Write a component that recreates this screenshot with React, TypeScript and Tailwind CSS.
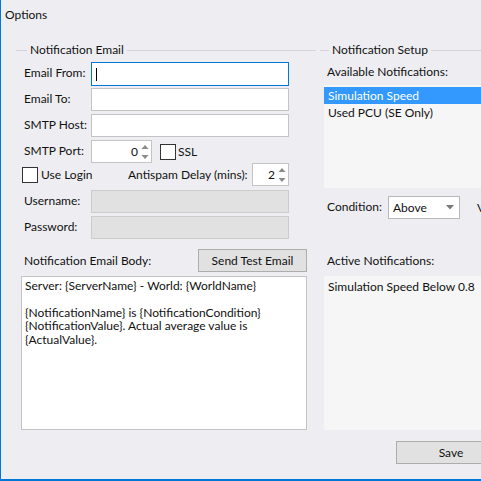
import React from 'react';

const GroupHeader: React.FC<{ title: string; lead: string }> = ({ title, lead }) => (
  <div className="flex h-[12px] items-center">
    <div className={`h-px bg-[#d5d5d9] ${lead}`} />
    <span className="px-[3px] leading-none whitespace-nowrap">{title}</span>
    <div className="h-px flex-1 bg-[#d5d5d9]" />
  </div>
);

const SpinArrows: React.FC = () => (
  <svg width="12" height="21" viewBox="0 0 12 21" className="shrink-0">
    <path d="M2.5 8 L6 4 L9.5 8 Z" fill="#8a8a8a" />
    <path d="M2.5 14 L6 18 L9.5 14 Z" fill="#8a8a8a" />
  </svg>
);

const Spinner: React.FC<{ value: string; width: string }> = ({ value, width }) => (
  <div className={`flex h-[23px] items-center border border-[#c4c4c4] bg-white ${width}`}>
    <span className="flex-1 pr-[1px] text-right">{value}</span>
    <SpinArrows />
  </div>
);

const Checkbox: React.FC = () => (
  <div className="h-[16px] w-[16px] shrink-0 border border-[#333333] bg-white" />
);

const FieldRow: React.FC<{ label: string; className?: string; children: React.ReactNode }> = ({
  label,
  className = '',
  children,
}) => (
  <div className={`flex items-center ${className}`}>
    <span className="w-[67px] shrink-0 pb-[2px]">{label}</span>
    {children}
  </div>
);

export default function App() {
  return (
    <div className="flex h-[481px] w-[481px] flex-col overflow-hidden border-b-2 border-l border-[#0078d7] bg-[#eeeef2] font-['Lato',sans-serif] text-[12px] text-[#111111]">
      <div className="flex h-[30px] shrink-0 items-center pl-[4px]">Options</div>

      <div className="flex pl-[15px] pt-[14px]">
        {/* Notification Email */}
        <div className="flex w-[300px] shrink-0 flex-col">
          <GroupHeader title="Notification Email" lead="w-[11px]" />

          <div className="mt-[6px] flex flex-col pl-[8px]">
            <FieldRow label="Email From:">
              <div className="flex h-[24px] w-[198px] items-center border border-[#0078d7] bg-white pl-[4px]">
                <div className="h-[13px] w-px bg-black" />
              </div>
            </FieldRow>
            <FieldRow label="Email To:" className="mt-[2px]">
              <div className="h-[23px] w-[198px] border border-[#c4c4c4] bg-white" />
            </FieldRow>
            <FieldRow label="SMTP Host:" className="mt-[3px]">
              <div className="h-[23px] w-[198px] border border-[#c4c4c4] bg-white" />
            </FieldRow>
            <FieldRow label="SMTP Port:" className="mt-[3px]">
              <Spinner value="0" width="w-[61px]" />
              <div className="ml-[8px] flex items-center gap-[2px]">
                <Checkbox />
                <span>SSL</span>
              </div>
            </FieldRow>
            <div className="-ml-[2px] flex h-[23px] items-center">
              <Checkbox />
              <span className="ml-[3px] w-[87px]">Use Login</span>
              <span className="w-[124px]">Antispam Delay (mins):</span>
              <Spinner value="2" width="w-[37px]" />
            </div>
            <FieldRow label="Username:" className="mt-[4px]">
              <div className="h-[23px] w-[198px] border border-[#cccccc] bg-[#e1e1e1]" />
            </FieldRow>
            <FieldRow label="Password:" className="mt-[3px]">
              <div className="h-[23px] w-[198px] border border-[#cccccc] bg-[#e1e1e1]" />
            </FieldRow>
          </div>

          <div className="ml-[5px] mt-[10px] flex w-[286px] flex-col">
            <div className="flex h-[23px] items-center justify-between">
              <span className="pl-[3px]">Notification Email Body:</span>
              <button className="h-[23px] w-[109px] border border-[#adadad] bg-[#e1e1e1] text-center">
                Send Test Email
              </button>
            </div>
            <div className="mt-[4px] h-[154px] border border-[#c4c4c4] bg-white px-[3px] pt-[2px] leading-[13.4px] whitespace-pre-line">
              {'Server: {ServerName} - World: {WorldName}\n\n{NotificationName} is {NotificationCondition}\n{NotificationValue}. Actual average value is\n{ActualValue}.'}
            </div>
          </div>
        </div>

        {/* Notification Setup */}
        <div className="ml-[4px] flex w-[240px] shrink-0 flex-col">
          <GroupHeader title="Notification Setup" lead="w-[9px]" />

          <div className="mt-[4px] flex h-[23px] items-center pl-[7px]">Available Notifications:</div>
          <div className="ml-[4px] mt-[2px] h-[103px] bg-[#f6f6f6] pt-[2px]">
            <div className="flex h-[17px] items-center bg-[#3399ff] pl-[4px] text-white">Simulation Speed</div>
            <div className="flex h-[17px] items-center pl-[4px]">Used PCU (SE Only)</div>
          </div>

          <div className="mt-[8px] flex h-[23px] items-center pl-[7px]">
            <span className="w-[61px] shrink-0 pb-[2px]">Condition:</span>
            <div className="flex h-[23px] w-[72px] shrink-0 items-center justify-between border border-[#b9b9b9] bg-white pl-[4px] pr-[5px]">
              <span>Above</span>
              <svg width="8" height="5" viewBox="0 0 8 5">
                <path d="M0 0 L8 0 L4 4.5 Z" fill="#7a7a7a" />
              </svg>
            </div>
            <span className="ml-[17px] whitespace-nowrap">Value:</span>
          </div>

          <div className="mt-[30px] flex h-[23px] items-center pl-[7px]">Active Notifications:</div>
          <div className="ml-[4px] mt-[4px] h-[154px] bg-[#f6f6f6] pt-[2px]">
            <div className="flex h-[17px] items-center pl-[4px]">Simulation Speed Below 0.8</div>
          </div>

          <button className="ml-[76px] mt-[11px] h-[23px] w-[110px] border border-[#adadad] bg-[#e1e1e1] text-center">
            Save
          </button>
        </div>
      </div>
    </div>
  );
}
